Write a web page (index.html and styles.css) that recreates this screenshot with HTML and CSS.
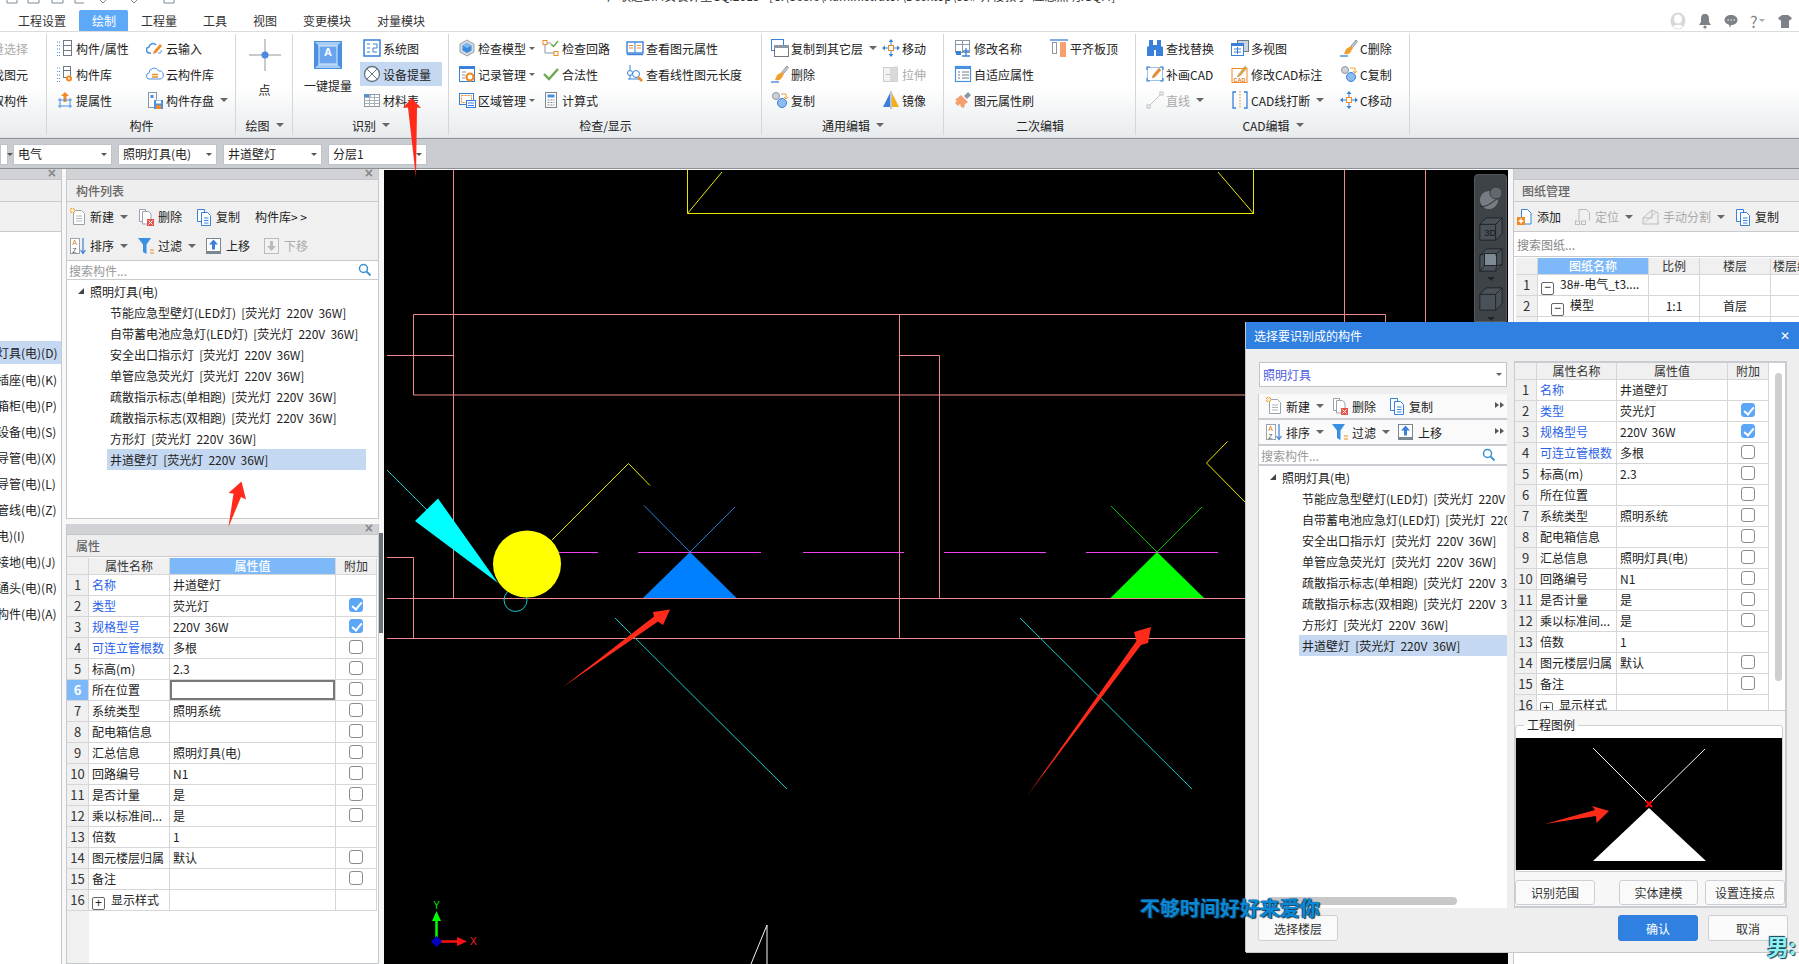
FILE: index.html
```html
<!DOCTYPE html>
<html lang="zh-CN">
<head>
<meta charset="utf-8">
<title>广联达BIM安装计量GQI2018</title>
<link rel="stylesheet" href="styles.css">
</head>
<body>
<svg class="sprite" xmlns="http://www.w3.org/2000/svg">
  <symbol id="i-attr" viewBox="0 0 18 18"><path d="M1 3h4M1 6.500h4M1 10h4M1 13.500h4M1 16.500h4" stroke="#4a90e2" stroke-dasharray="1 1" fill="none"/><rect x="7.500" y="1.500" width="8" height="15" fill="#fff" stroke="#6f7a84"/><path d="M7.500 6.500h8M7.500 11.500h8" stroke="#6f7a84"/></symbol>
  <symbol id="i-lib" viewBox="0 0 18 18"><path d="M1 3h4M1 6.500h4M1 10h4M1 13.500h4M1 16.500h4" stroke="#4a90e2" stroke-dasharray="1 1" fill="none"/><rect x="7.500" y="1.500" width="7" height="11" fill="#fff" stroke="#6f7a84"/><path d="M7.500 5.500h7" stroke="#6f7a84"/><circle cx="13" cy="13.500" r="3" fill="#f08a24"/><circle cx="13" cy="13.500" r="1" fill="#fff"/></symbol>
  <symbol id="i-cloudin" viewBox="0 0 18 18"><path d="M5 14H4a3 3 0 0 1-1-6 4 4 0 0 1 7-2" fill="none" stroke="#4a90e2" stroke-width="1.500"/><path d="M8 12l6-7 2 2-6 7-3 1z" fill="#f08a24"/><path d="M12 14h2a2 2 0 0 0 1-3" fill="none" stroke="#4a90e2"/></symbol>
  <symbol id="i-cloudlib" viewBox="0 0 18 18"><path d="M5 14H4a3 3 0 0 1-1-6 5 5 0 0 1 9.500-2A4 4 0 0 1 14 14z" fill="none" stroke="#4a90e2"/><path d="M6 9.500h6M6 12h6" stroke="#f08a24" stroke-width="1.500"/></symbol>
  <symbol id="i-raise" viewBox="0 0 18 18"><path d="M9 1l4 4h-2.500v6h-3V5H5z" fill="#f08a24"/><path d="M2 9h14M2 15h14M4 7v10M14 7v10" stroke="#4a90e2" fill="none"/></symbol>
  <symbol id="i-save" viewBox="0 0 18 18"><rect x="2.500" y="1.500" width="8" height="15" fill="#fff" stroke="#8b97a3"/><rect x="4.500" y="4" width="3" height="3" fill="#4a90e2"/><rect x="8" y="9" width="9" height="9" fill="#4a90e2"/><rect x="10" y="9.500" width="5" height="3" fill="#fff"/><rect x="10" y="14" width="5" height="4" fill="#f08a24"/></symbol>
  <symbol id="i-sys" viewBox="0 0 18 18"><rect x="1" y="1" width="16" height="16" fill="#fff" stroke="#3a80d8" stroke-width="1.500"/><path d="M4 5h3M4 9h3M4 13h3M10 5h4v4h-4M10 9v4h4" fill="none" stroke="#3a80d8"/></symbol>
  <symbol id="i-dev" viewBox="0 0 18 18"><circle cx="9" cy="9" r="7.500" fill="#fff" stroke="#687684" stroke-width="1.300"/><path d="M4 4l10 10M14 4L4 14" stroke="#687684"/></symbol>
  <symbol id="i-mat" viewBox="0 0 18 18"><rect x="1.500" y="3.500" width="15" height="12" fill="#fff" stroke="#8b97a3"/><rect x="1.500" y="3.500" width="6" height="3" fill="#4a90e2"/><path d="M1.500 6.500h15M1.500 9.500h15M1.500 12.500h15M6.500 3.500v12M11.500 3.500v12" stroke="#a8b0b8"/></symbol>
  <symbol id="i-model" viewBox="0 0 18 18"><path d="M9 1l7 4v8l-7 4-7-4V5z" fill="#d5d9dd" stroke="#9aa3ab"/><path d="M9 4l4.500 2.500v5L9 14l-4.500-2.500v-5z" fill="#3a8ae0"/><path d="M9 4l4.500 2.500L9 9 4.500 6.500z" fill="#7fb8f2"/></symbol>
  <symbol id="i-record" viewBox="0 0 18 18"><rect x="1.500" y="1.500" width="15" height="15" fill="#fff" stroke="#3a80d8"/><rect x="1" y="1" width="16" height="3" fill="#3a80d8"/><path d="M4 7h4M4 10h3M4 13h3" stroke="#8b97a3"/><circle cx="12" cy="12" r="3.500" fill="none" stroke="#f08a24" stroke-width="2.200"/></symbol>
  <symbol id="i-area" viewBox="0 0 18 18"><rect x="1.500" y="2.500" width="14" height="11" fill="#fff" stroke="#3a80d8"/><rect x="3.500" y="4.500" width="10" height="7" fill="none" stroke="#f08a24" stroke-dasharray="2 1"/><rect x="8.500" y="9.500" width="9" height="7" fill="#fff" stroke="#3a80d8"/><path d="M10 12h6M10 14.500h6" stroke="#3a80d8"/></symbol>
  <symbol id="i-loop" viewBox="0 0 18 18"><path d="M3 4h6M3 4v10h10" fill="none" stroke="#8b97a3"/><rect x="1" y="1.500" width="4" height="4" fill="#fff" stroke="#f08a24"/><rect x="12" y="12.500" width="4" height="4" fill="#fff" stroke="#f08a24"/><path d="M9 5l2.500 2.500L16 2" fill="none" stroke="#6aa84f" stroke-width="1.500"/></symbol>
  <symbol id="i-check" viewBox="0 0 18 18"><path d="M2 9l5 5 9-10" fill="none" stroke="#6aa84f" stroke-width="2.400"/></symbol>
  <symbol id="i-calc" viewBox="0 0 18 18"><rect x="3.500" y="1.500" width="11" height="15" fill="#fff" stroke="#7a8690"/><rect x="5.500" y="3.500" width="7" height="3" fill="#4a90e2"/><path d="M5.500 9h7M5.500 11.500h7M5.500 14h7" stroke="#7a8690" stroke-dasharray="2 1"/></symbol>
  <symbol id="i-book" viewBox="0 0 18 18"><rect x="1" y="3" width="16" height="11" fill="#fff" stroke="#3a80d8" stroke-width="1.400"/><path d="M9 3v11" stroke="#3a80d8"/><path d="M3 6.500h4M3 9h4M11 6.500h4M11 9h4" stroke="#f08a24"/><path d="M1 15.500h16" stroke="#3a80d8" stroke-width="1.400"/></symbol>
  <symbol id="i-len" viewBox="0 0 18 18"><path d="M4 0v14M2 14h12" stroke="#3a80d8"/><circle cx="4" cy="8" r="2.500" fill="#fff" stroke="#3a80d8"/><circle cx="10" cy="9" r="3.500" fill="#fff" stroke="#3a80d8"/><path d="M12 12l4 4" stroke="#f08a24" stroke-width="2.500"/></symbol>
  <symbol id="i-copyto" viewBox="0 0 18 18"><rect x="0" y="0" width="13" height="3" fill="#3a80d8"/><rect x=".5" y=".5" width="12" height="11" fill="#fff" stroke="#3a80d8"/><rect x="3.500" y="6.500" width="14" height="11" fill="#fff" stroke="#6f7a84"/><rect x="3" y="6" width="15" height="3" fill="#8b97a3"/></symbol>
  <symbol id="i-del" viewBox="0 0 18 18"><path d="M11 7l5-6 1.500 1.500-5 6z" fill="#c8ccd0" stroke="#8b97a3"/><path d="M6 10l5-3 2 2-3 5c-2 1.500-4 1.500-6 1z" fill="#f0a030"/><path d="M0 17h8" stroke="#3a80d8" stroke-width="1.300"/></symbol>
  <symbol id="i-copy" viewBox="0 0 18 18"><circle cx="5" cy="5" r="3.500" fill="#ccd1d6" stroke="#8b97a3"/><circle cx="11" cy="12" r="4.500" fill="#8cbcf0" stroke="#3a80d8"/><path d="M10 3h5v4M13 6l2 2 2-2" fill="none" stroke="#f0a030"/></symbol>
  <symbol id="i-move" viewBox="0 0 18 18"><path d="M9 0l2.500 3h-5zM9 18l-2.500-3h5zM0 9l3-2.500v5zM18 9l-3 2.500v-5z" fill="#3a80d8"/><path d="M9 3v12M3 9h12" stroke="#3a80d8"/><rect x="6.500" y="6.500" width="5" height="5" fill="#fff" stroke="#f08a24"/></symbol>
  <symbol id="i-stretch" viewBox="0 0 18 18"><rect x="1.500" y="2.500" width="14" height="14" fill="#f3f3f3" stroke="#ccc"/><path d="M8 2.500l7.500-1.500v15.500H8z" fill="#d9d9d9"/><path d="M4 9.500h4" stroke="#bbb"/></symbol>
  <symbol id="i-mirror" viewBox="0 0 18 18"><path d="M8 2v14H1z" fill="#3a80d8"/><path d="M10 2v14h7z" fill="#f2b01e"/><path d="M9 0v18" stroke="#6f7a84" stroke-width=".8"/></symbol>
  <symbol id="i-rename" viewBox="0 0 18 18"><rect x="1.500" y="1.500" width="14" height="12" fill="#fff" stroke="#8b97a3"/><path d="M1.500 5.500h14M8.500 1.500v12" stroke="#8b97a3"/><rect x="2" y="12" width="5" height="4" fill="#3a80d8"/><path d="M9 12h6M12 9v8M8 17h8" stroke="#3a80d8" stroke-width="1.300"/></symbol>
  <symbol id="i-adapt" viewBox="0 0 18 18"><rect x="1.500" y="1.500" width="15" height="15" fill="#fff" stroke="#4a90e2" stroke-width="1.200"/><rect x="1" y="1" width="16" height="3" fill="#4a90e2"/><path d="M4 7h2M4 10h2M4 13h2M8 7h7M8 10h7M8 13h7" stroke="#6f7a84"/></symbol>
  <symbol id="i-brush" viewBox="0 0 18 18"><path d="M10 5l4-4 3 3-4 4z" fill="#8b97a3"/><path d="M7 4l7 7-3 2-1 4-3-1-1-3-2 2-3-3 2-2-2-1z" fill="#f3a070"/></symbol>
  <symbol id="i-align" viewBox="0 0 18 18"><path d="M0 1h18" stroke="#3a80d8" stroke-width="1.300"/><rect x="2.500" y="3.500" width="4" height="11" fill="#fff" stroke="#8b97a3"/><rect x="10" y="3" width="6" height="15" fill="#f8a070"/></symbol>
  <symbol id="i-find" viewBox="0 0 18 18"><path d="M3 1h4v5h4V1h4v6l2 1v9h-7v-6H8v6H1V8l2-1z" fill="#3a80d8"/></symbol>
  <symbol id="i-cadadd" viewBox="0 0 18 18"><path d="M1 5V2h3M14 16h3v-3M1 13v3h3M14 2h3v3" fill="none" stroke="#3a80d8" stroke-width="1.200"/><path d="M1.500 2.500h15v13h-15z" fill="none" stroke="#3a80d8" stroke-width=".5"/><path d="M6 13l1-3 6-7 2 2-6 7z" fill="#f08a24" stroke="#8b97a3" stroke-width=".4"/></symbol>
  <symbol id="i-line" viewBox="0 0 18 18"><path d="M3 15L15 3" stroke="#c4c4c4"/><rect x="1" y="14" width="3" height="3" fill="#fff" stroke="#bbb"/><rect x="14" y="1" width="3" height="3" fill="#fff" stroke="#bbb"/></symbol>
  <symbol id="i-multi" viewBox="0 0 18 18"><rect x="6.500" y="1.500" width="11" height="11" fill="#c8d4e0" stroke="#6f7a84"/><rect x=".5" y="4.500" width="12" height="12" fill="#fff" stroke="#3a80d8"/><rect x="0" y="4" width="13" height="3" fill="#3a80d8"/><path d="M3 10h7M3 13h7M6.500 8v7" stroke="#3a80d8"/></symbol>
  <symbol id="i-cadmark" viewBox="0 0 18 18"><rect x="1" y="3.500" width="15" height="14" fill="#fff" stroke="#f08a24"/><path d="M7 10l7-9 2 2-7 8-3 1z" fill="#e8a030" stroke="#8b97a3" stroke-width=".4"/><text x="2.500" y="16.500" class="svgcad">CAD</text></symbol>
  <symbol id="i-break" viewBox="0 0 18 18"><path d="M5 1H2v16h3M13 1h3v16h-3" fill="none" stroke="#3a80d8" stroke-width="1.300"/><path d="M9 0v18" stroke="#f08a24" stroke-dasharray="1.500 1.500"/></symbol>
  <symbol id="i-new" viewBox="0 0 18 18"><path d="M4.500 2.500h8l3 3v11h-11z" fill="#fff" stroke="#9aa3ab"/><path d="M7 8h6M7 10.500h6M7 13h6" stroke="#b0b6bc"/><rect x="1" y="0" width="5" height="5" fill="#f0a030"/><path d="M1 2.500h5M3.500 0v5M1 0l5 5M6 0L1 5" stroke="#fff" stroke-width=".7"/></symbol>
  <symbol id="i-rm" viewBox="0 0 18 18"><path d="M2.500 1.500h6v12h-6z" fill="#fff" stroke="#9aa3ab"/><path d="M5.500 3.500h6l2.500 2.500v10h-8.500z" fill="#fff" stroke="#9aa3ab"/><rect x="10" y="11" width="7" height="7" fill="#e8524a"/><path d="M11.500 12.500l4 4M15.500 12.500l-4 4" stroke="#fff"/></symbol>
  <symbol id="i-dup" viewBox="0 0 18 18"><path d="M2.500 1.500h7v12h-7z" fill="#fff" stroke="#3a80d8"/><path d="M6.500 4.500h6l3 3v10h-9z" fill="#fff" stroke="#3a80d8"/><path d="M9 10h4.500M9 12.500h4.500M9 15h4.500" stroke="#3a80d8"/></symbol>
  <symbol id="i-sort" viewBox="0 0 18 18"><rect x="1.500" y="1.500" width="9" height="15" fill="#fff" stroke="#9aa3ab"/><text x="3.200" y="8" class="svgaz az1">A</text><text x="3.200" y="15.500" class="svgaz">Z</text><path d="M14 1v15M11.500 13l2.500 3.500 2.500-3.500" fill="none" stroke="#3a80d8" stroke-width="1.200"/></symbol>
  <symbol id="i-filter" viewBox="0 0 18 18"><path d="M1 1h13l-4.500 6.500V17L6 15V7.500z" fill="#3a90e0"/><path d="M13 13h4M13 16h4" stroke="#f08a24"/></symbol>
  <symbol id="i-up" viewBox="0 0 18 18"><rect x="1.500" y="1.500" width="14" height="15" fill="#fff" stroke="#7a8690"/><rect x="1" y="14" width="15" height="3" fill="#7a8690"/><path d="M8.500 2.500l4.500 5h-3v5h-3v-5h-3z" fill="#3a80d8"/></symbol>
  <symbol id="i-down" viewBox="0 0 18 18"><rect x="1.500" y="1.500" width="14" height="15" fill="#f2f2f2" stroke="#bbb"/><path d="M8.500 14l-4.500-5h3V4h3v5h3z" fill="#bbb"/></symbol>
  <symbol id="i-add" viewBox="0 0 18 18"><path d="M5.500 1.500h6l3.500 3.500v11h-9.500z" fill="#fff" stroke="#3a80d8"/><rect x="1" y="9" width="8" height="8" fill="#f08a24"/><path d="M5 10.500v5M2.500 13h5" stroke="#fff" stroke-width="1.400"/></symbol>
  <symbol id="i-locate" viewBox="0 0 18 18"><path d="M7.500 1.500h5l3 3v8M5 12V1.500h3" fill="none" stroke="#bbb"/><rect x="1.500" y="13" width="4" height="3.500" fill="none" stroke="#bbb"/><rect x="7.500" y="13" width="4" height="3.500" fill="none" stroke="#bbb"/></symbol>
  <symbol id="i-split" viewBox="0 0 18 18"><path d="M1 16h16M1 10l9-8 6 3v11M1 10v6M10 2v8H1" fill="none" stroke="#bbb"/><path d="M3 14l12-10" stroke="#bbb" stroke-dasharray="2 1"/></symbol>
  <symbol id="i-search" viewBox="0 0 14 14"><circle cx="5.500" cy="5.500" r="4" fill="none" stroke="#3a90d0" stroke-width="1.500"/><path d="M8.500 8.500l4 4" stroke="#3a90d0" stroke-width="1.800"/></symbol>
  <symbol id="i-cube" viewBox="0 0 28 28"><path d="M2 9l7-7h17v17l-7 7H2z" fill="#4a5159" stroke="#1d2024"/><path d="M2 9h17v17M19 9l7-7" fill="none" stroke="#1d2024"/></symbol>
</svg>

<div class="app">
  <header class="strip">
    <svg class="qat" width="200" height="6" viewBox="0 0 200 6"><path d="M7 0v3h10V0M28 0v3h11V0M52 0v3h11V0M75 0v3h9M100 0l3 3 3-3M131 0l3 3 3-3M164 0v3h10V0" fill="none" stroke="#7a8a9a"/></svg>
    <div class="doc-title">广联达BIM安装计量GQI2018 - [C:\Users\Administrator\Desktop\38#-井楼教学-应急照明.GQI4]</div>
  </header>
  <nav class="tabs">
    <span class="tab first">工程设置</span>
    <span class="tab on">绘制</span>
    <span class="tab">工程量</span>
    <span class="tab">工具</span>
    <span class="tab">视图</span>
    <span class="tab">变更模块</span>
    <span class="tab">对量模块</span>
    <div class="user">
      <svg width="16" height="18" viewBox="0 0 16 18"><ellipse cx="8" cy="9" rx="7.500" ry="8.500" fill="#d6d8da"/><ellipse cx="8" cy="7" rx="4" ry="4.500" fill="#fff"/><path d="M3 15c1-3 9-3 10 0l-5 2z" fill="#fff"/></svg>
      <svg width="14" height="16" viewBox="0 0 14 16"><path d="M7 1c3 0 4 2 4 5v3l2 3H1l2-3V6c0-3 1-5 4-5z" fill="#7c8288"/><circle cx="7" cy="14" r="1.600" fill="#7c8288"/></svg>
      <svg width="14" height="14" viewBox="0 0 14 14"><path d="M7 1c3.500 0 6.500 2 6.500 5S10.500 11 7 11l-1 3-1-3.300C2.500 10 .5 8.500 .5 6 .5 3 3.500 1 7 1z" fill="#7c8288"/><path d="M3.500 6h1.500M6.500 6H8M9.500 6H11" stroke="#fff"/></svg>
      <span class="help">?<i class="caret small"></i></span>
      <svg width="14" height="14" viewBox="0 0 14 14"><path d="M4 1h6l4 3-2 2.500-1-.5v8H3V6l-1 .5L0 4z" fill="#7c8288"/></svg>
    </div>
  </nav>

  <section class="ribbon">
    <div class="rg g0">
      <div class="rgrid">
        <div class="ri end off">批量选择</div>
        <div class="ri end">查找图元</div>
        <div class="ri end">拾取构件</div>
      </div>
    </div>
    <div class="rg g1">
      <div class="rgrid">
        <div class="ri"><svg class="ic"><use href="#i-attr"/></svg>构件/属性</div>
        <div class="ri"><svg class="ic"><use href="#i-cloudin"/></svg>云输入</div>
        <div class="ri"><svg class="ic"><use href="#i-lib"/></svg>构件库</div>
        <div class="ri"><svg class="ic"><use href="#i-cloudlib"/></svg>云构件库</div>
        <div class="ri"><svg class="ic"><use href="#i-raise"/></svg>提属性</div>
        <div class="ri"><svg class="ic"><use href="#i-save"/></svg>构件存盘<i class="caret"></i></div>
      </div>
      <div class="rlabel">构件</div>
    </div>
    <div class="rg g2">
      <div class="rbig">
        <svg width="34" height="34" viewBox="0 0 34 34"><path d="M17 1v32M1 17h32" stroke="#8c979f"/><circle cx="17" cy="17" r="3.500" fill="#4a8ae0"/></svg>
        <span>点</span>
      </div>
      <div class="rlabel">绘图<i class="caret"></i></div>
    </div>
    <div class="rg g3">
      <div class="rg3-body">
        <div class="rbig big-a">
          <svg width="28" height="28" viewBox="0 0 28 28"><rect width="28" height="28" fill="#4a90e2"/><path d="M1 1l5 5h16l5-5zM1 27l5-5h16l5 5z" fill="#a8cdf5"/><rect x="5" y="5" width="18" height="18" fill="#6aa5ee" stroke="#dceafa"/><text x="14" y="15" class="svga">A</text></svg>
          <span>一键提量</span>
        </div>
        <div class="rcol">
          <div class="ri pad"><svg class="ic"><use href="#i-sys"/></svg>系统图</div>
          <div class="ri pad hl"><svg class="ic"><use href="#i-dev"/></svg>设备提量</div>
          <div class="ri pad"><svg class="ic"><use href="#i-mat"/></svg>材料表</div>
        </div>
      </div>
      <div class="rlabel">识别<i class="caret"></i></div>
    </div>
    <div class="rg g4">
      <div class="rgrid">
        <div class="ri"><svg class="ic"><use href="#i-model"/></svg>检查模型<i class="caret tight"></i></div>
        <div class="ri"><svg class="ic"><use href="#i-loop"/></svg>检查回路</div>
        <div class="ri"><svg class="ic"><use href="#i-book"/></svg>查看图元属性</div>
        <div class="ri"><svg class="ic"><use href="#i-record"/></svg>记录管理<i class="caret tight"></i></div>
        <div class="ri"><svg class="ic"><use href="#i-check"/></svg>合法性</div>
        <div class="ri"><svg class="ic"><use href="#i-len"/></svg>查看线性图元长度</div>
        <div class="ri"><svg class="ic"><use href="#i-area"/></svg>区域管理<i class="caret tight"></i></div>
        <div class="ri"><svg class="ic"><use href="#i-calc"/></svg>计算式</div>
      </div>
      <div class="rlabel">检查/显示</div>
    </div>
    <div class="rg g5">
      <div class="rgrid">
        <div class="ri"><svg class="ic"><use href="#i-copyto"/></svg>复制到其它层<i class="caret"></i></div>
        <div class="ri"><svg class="ic"><use href="#i-move"/></svg>移动</div>
        <div class="ri"><svg class="ic"><use href="#i-del"/></svg>删除</div>
        <div class="ri off"><svg class="ic"><use href="#i-stretch"/></svg>拉伸</div>
        <div class="ri"><svg class="ic"><use href="#i-copy"/></svg>复制</div>
        <div class="ri"><svg class="ic"><use href="#i-mirror"/></svg>镜像</div>
      </div>
      <div class="rlabel">通用编辑<i class="caret"></i></div>
    </div>
    <div class="rg g6">
      <div class="rgrid">
        <div class="ri"><svg class="ic"><use href="#i-rename"/></svg>修改名称</div>
        <div class="ri"><svg class="ic"><use href="#i-align"/></svg>平齐板顶</div>
        <div class="ri"><svg class="ic"><use href="#i-adapt"/></svg>自适应属性</div>
        <div></div>
        <div class="ri"><svg class="ic"><use href="#i-brush"/></svg>图元属性刷</div>
      </div>
      <div class="rlabel">二次编辑</div>
    </div>
    <div class="rg g7">
      <div class="rgrid">
        <div class="ri"><svg class="ic"><use href="#i-find"/></svg>查找替换</div>
        <div class="ri"><svg class="ic"><use href="#i-multi"/></svg>多视图</div>
        <div class="ri"><svg class="ic"><use href="#i-del"/></svg>C删除</div>
        <div class="ri"><svg class="ic"><use href="#i-cadadd"/></svg>补画CAD</div>
        <div class="ri"><svg class="ic"><use href="#i-cadmark"/></svg>修改CAD标注</div>
        <div class="ri"><svg class="ic"><use href="#i-copy"/></svg>C复制</div>
        <div class="ri off"><svg class="ic"><use href="#i-line"/></svg>直线<i class="caret"></i></div>
        <div class="ri"><svg class="ic"><use href="#i-break"/></svg>CAD线打断<i class="caret"></i></div>
        <div class="ri"><svg class="ic"><use href="#i-move"/></svg>C移动</div>
      </div>
      <div class="rlabel">CAD编辑<i class="caret"></i></div>
    </div>
  </section>

  <div class="selectors">
    <span class="sel stub"><i class="caret"></i></span>
    <span class="sel">电气<i class="caret"></i></span>
    <span class="sel">照明灯具(电)<i class="caret"></i></span>
    <span class="sel">井道壁灯<i class="caret"></i></span>
    <span class="sel">分层1<i class="caret"></i></span>
  </div>

  <main class="work">
    <aside class="nav-pane">
      <div class="pane-head"><span class="x">×</span></div>
      <div class="pane-title"></div>
      <div class="nav-tools"></div>
      <ul class="nav-list">
        <li class="cur">灯具(电)(D)</li>
        <li>插座(电)(K)</li>
        <li>箱柜(电)(P)</li>
        <li>设备(电)(S)</li>
        <li>导管(电)(X)</li>
        <li>导管(电)(L)</li>
        <li>管线(电)(Z)</li>
        <li>电)(I)</li>
        <li>接地(电)(J)</li>
        <li>通头(电)(R)</li>
        <li>构件(电)(A)</li>
      </ul>
    </aside>

    <div class="mid">
      <section class="panel list-panel">
        <div class="pane-head"><span class="x">×</span></div>
        <div class="pane-title">构件列表</div>
        <div class="tools">
          <div class="trow">
            <span class="ti w68"><svg class="ic"><use href="#i-new"/></svg>新建<i class="caret"></i></span>
            <span class="ti w58"><svg class="ic"><use href="#i-rm"/></svg>删除</span>
            <span class="ti w60"><svg class="ic"><use href="#i-dup"/></svg>复制</span>
            <span class="ti">构件库&gt; &gt;</span>
          </div>
          <div class="trow">
            <span class="ti w68"><svg class="ic"><use href="#i-sort"/></svg>排序<i class="caret"></i></span>
            <span class="ti w68"><svg class="ic"><use href="#i-filter"/></svg>过滤<i class="caret"></i></span>
            <span class="ti w58"><svg class="ic"><use href="#i-up"/></svg>上移</span>
            <span class="ti off"><svg class="ic"><use href="#i-down"/></svg>下移</span>
          </div>
        </div>
        <div class="search"><span>搜索构件...</span><svg class="ic14"><use href="#i-search"/></svg></div>
        <div class="tree">
          <div class="tnode"><i class="tri"></i>照明灯具(电)</div>
          <div class="tleaf">节能应急型壁灯(LED灯) [荧光灯 220V 36W]</div>
          <div class="tleaf">自带蓄电池应急灯(LED灯) [荧光灯 220V 36W]</div>
          <div class="tleaf">安全出口指示灯 [荧光灯 220V 36W]</div>
          <div class="tleaf">单管应急荧光灯 [荧光灯 220V 36W]</div>
          <div class="tleaf">疏散指示标志(单相跑) [荧光灯 220V 36W]</div>
          <div class="tleaf">疏散指示标志(双相跑) [荧光灯 220V 36W]</div>
          <div class="tleaf">方形灯 [荧光灯 220V 36W]</div>
          <div class="tleaf cur">井道壁灯 [荧光灯 220V 36W]</div>
        </div>
      </section>

      <section class="panel prop-panel">
        <div class="pane-head"><span class="x">×</span></div>
        <div class="pane-title">属性</div>
        <div class="prop-body">
          <table class="grid props">
            <colgroup><col class="c22"><col class="c81"><col class="c166"><col class="c41"></colgroup>
            <tr class="hd"><th></th><th>属性名称</th><th class="active">属性值</th><th>附加</th></tr>
            <tr><td class="n">1</td><td class="k blue">名称</td><td>井道壁灯</td><td></td></tr>
            <tr><td class="n">2</td><td class="k blue">类型</td><td>荧光灯</td><td class="c"><i class="cb on"></i></td></tr>
            <tr><td class="n">3</td><td class="k blue">规格型号</td><td>220V 36W</td><td class="c"><i class="cb on"></i></td></tr>
            <tr><td class="n">4</td><td class="k blue">可连立管根数</td><td>多根</td><td class="c"><i class="cb"></i></td></tr>
            <tr><td class="n">5</td><td class="k">标高(m)</td><td>2.3</td><td class="c"><i class="cb"></i></td></tr>
            <tr><td class="n sel-n">6</td><td class="k">所在位置</td><td class="edit"></td><td class="c"><i class="cb"></i></td></tr>
            <tr><td class="n">7</td><td class="k">系统类型</td><td>照明系统</td><td class="c"><i class="cb"></i></td></tr>
            <tr><td class="n">8</td><td class="k">配电箱信息</td><td></td><td class="c"><i class="cb"></i></td></tr>
            <tr><td class="n">9</td><td class="k">汇总信息</td><td>照明灯具(电)</td><td class="c"><i class="cb"></i></td></tr>
            <tr><td class="n">10</td><td class="k">回路编号</td><td>N1</td><td class="c"><i class="cb"></i></td></tr>
            <tr><td class="n">11</td><td class="k">是否计量</td><td>是</td><td class="c"><i class="cb"></i></td></tr>
            <tr><td class="n">12</td><td class="k">乘以标准间...</td><td>是</td><td class="c"><i class="cb"></i></td></tr>
            <tr><td class="n">13</td><td class="k">倍数</td><td>1</td><td></td></tr>
            <tr><td class="n">14</td><td class="k">图元楼层归属</td><td>默认</td><td class="c"><i class="cb"></i></td></tr>
            <tr><td class="n">15</td><td class="k">备注</td><td></td><td class="c"><i class="cb"></i></td></tr>
            <tr><td class="n">16</td><td class="k"><i class="exp">+</i>显示样式</td><td></td><td></td></tr>
          </table>
        </div>
      </section>
    </div>

    <div class="splitter"><div class="thumb"></div></div>

    <div class="canvas">
      <svg class="cad" width="1124" height="794" viewBox="384 170 1124 794">
        <g class="pink">
          <path d="M453.500 170V598M1344.500 170V322M1425.500 170V322"/>
          <path d="M413.500 395V314.500H1385.500V322M413.500 395H1246"/>
          <path d="M387 355.500H453.500M899.500 314.500V638.500M899.500 355.500H939.500V598M387 598.500H1246M387 638.500H1246M387 557.500H413.500V638.500"/>
        </g>
        <path class="yellow" d="M687.500 170V213.500H1253.500V170M687.500 213.500L722 172M1253.500 213.500L1218 172M552 540L628.500 463.500L650 485.500M1227.500 441.500L1206.500 463L1246 503"/>
        <path class="cyan" d="M387 470L427 510M615 618L787 789M1020 618L1192 789"/>
        <polygon class="f-cyan" points="438,498.500 415,521 498,583"/>
        <circle class="cyan" cx="515.500" cy="600" r="11.500"/>
        <ellipse class="f-yellow" cx="527" cy="564" rx="34" ry="33.500"/>
        <path class="magenta" d="M559 552.500H598M638 552.500H761M803 552.500H904M944 552.500H1046M1086 552.500H1218"/>
        <polygon class="f-blue" points="690,552 643,598 736.500,598"/>
        <path class="blue-l" d="M644 505.500L690 552L735 507"/>
        <polygon class="f-green" points="1157,552 1110.500,598 1204,598"/>
        <path class="green-l" d="M1111 506L1157 552L1202 507"/>
        <path class="white-l" d="M767 925V964M767 925L751 964"/>
        <g>
          <path class="axis-g" d="M436.500 941V920"/>
          <polygon class="f-green" points="436.500,911 432,921 441,921"/>
          <path class="axis-r" d="M437 941.500H458"/>
          <polygon class="f-red" points="467,941.500 457,937 457,946"/>
          <polygon class="f-navy" points="436.500,936 442,941.500 436.500,947 431,941.500"/>
          <text x="436.500" y="909" class="ax-y">Y</text>
          <text x="470" y="945" class="ax-x">X</text>
        </g>
      </svg>
      <div class="gizmo">
        <svg width="26" height="26" viewBox="0 0 26 26"><ellipse cx="11" cy="15" rx="9" ry="9" fill="#777c82" transform="rotate(25 11 15)"/><circle cx="18" cy="8" r="6" fill="#63686e" stroke="#3a3d41"/><path d="M2 21c5 2 12-3 18-8" stroke="#2a2c30" fill="none"/></svg>
        <div class="cube3d"><svg width="26" height="28"><use href="#i-cube"/></svg><span>3D</span></div>
        <svg width="26" height="26" viewBox="0 0 28 28"><path d="M2 9l7-7h17v17l-7 7H2z" fill="#4a5159" stroke="#1d2024"/><rect x="7" y="7" width="13" height="13" fill="#7b8a95" stroke="#1d2024"/><path d="M2 9l5-2M19 9l1-2M2 26l5-6M19 26l1-6M26 2l-6 5M26 19l-6 1" stroke="#1d2024"/></svg>
        <i class="caret light"></i>
        <svg width="26" height="28"><use href="#i-cube"/></svg>
        <i class="caret light"></i>
      </div>
    </div>

    <aside class="right-pane">
      <div class="pane-head"></div>
      <div class="pane-title">图纸管理</div>
      <div class="tools single">
        <div class="trow">
          <span class="ti w58"><svg class="ic"><use href="#i-add"/></svg>添加</span>
          <span class="ti w68 off"><svg class="ic"><use href="#i-locate"/></svg>定位<i class="caret"></i></span>
          <span class="ti w92 off"><svg class="ic"><use href="#i-split"/></svg>手动分割<i class="caret"></i></span>
          <span class="ti"><svg class="ic"><use href="#i-dup"/></svg>复制</span>
        </div>
      </div>
      <div class="search tall"><span>搜索图纸...</span></div>
      <table class="grid sheets">
        <colgroup><col class="c22"><col class="c111"><col class="c51"><col class="c71"><col class="c100"></colgroup>
        <tr class="hd"><th></th><th class="active">图纸名称</th><th>比例</th><th>楼层</th><th class="clip">楼层编号</th></tr>
        <tr><td class="n">1</td><td><i class="exp minus">−</i>38#-电气_t3....</td><td></td><td></td><td></td></tr>
        <tr><td class="n">2</td><td><i class="exp minus deep">−</i>模型</td><td class="ctr">1:1</td><td class="ctr">首层</td><td></td></tr>
        <tr><td class="n"></td><td></td><td></td><td></td><td></td></tr>
      </table>
    </aside>
  </main>

  <section class="dialog">
    <div class="d-head"><span>选择要识别成的构件</span><span class="d-close">✕</span></div>
    <div class="d-main">
      <div class="d-left">
        <div class="combo">照明灯具<i class="caret"></i></div>
        <div class="d-tools">
          <div class="trow bar">
            <span class="ti w66"><svg class="ic"><use href="#i-new"/></svg>新建<i class="caret"></i></span>
            <span class="ti w57"><svg class="ic"><use href="#i-rm"/></svg>删除</span>
            <span class="ti"><svg class="ic"><use href="#i-dup"/></svg>复制</span>
            <span class="more"><i class="tick"></i><i class="tick"></i></span>
          </div>
          <div class="trow bar">
            <span class="ti w66"><svg class="ic"><use href="#i-sort"/></svg>排序<i class="caret"></i></span>
            <span class="ti w66"><svg class="ic"><use href="#i-filter"/></svg>过滤<i class="caret"></i></span>
            <span class="ti"><svg class="ic"><use href="#i-up"/></svg>上移</span>
            <span class="more"><i class="tick"></i><i class="tick"></i></span>
          </div>
          <div class="search"><span>搜索构件...</span><svg class="ic14"><use href="#i-search"/></svg></div>
          <div class="tree d-tree">
            <div class="tnode"><i class="tri"></i>照明灯具(电)</div>
            <div class="tleaf">节能应急型壁灯(LED灯) [荧光灯 220V 36W]</div>
            <div class="tleaf">自带蓄电池应急灯(LED灯) [荧光灯 220V 36W]</div>
            <div class="tleaf">安全出口指示灯 [荧光灯 220V 36W]</div>
            <div class="tleaf">单管应急荧光灯 [荧光灯 220V 36W]</div>
            <div class="tleaf">疏散指示标志(单相跑) [荧光灯 220V 36W]</div>
            <div class="tleaf">疏散指示标志(双相跑) [荧光灯 220V 36W]</div>
            <div class="tleaf">方形灯 [荧光灯 220V 36W]</div>
            <div class="tleaf cur">井道壁灯 [荧光灯 220V 36W]</div>
            <div class="hbar"></div>
          </div>
        </div>
      </div>
      <div class="d-right">
        <div class="d-table">
          <table class="grid dprops">
            <colgroup><col class="c22"><col class="c80"><col class="c111"><col class="c41"></colgroup>
            <tr class="hd"><th></th><th>属性名称</th><th>属性值</th><th>附加</th></tr>
            <tr><td class="n">1</td><td class="k blue">名称</td><td>井道壁灯</td><td></td></tr>
            <tr><td class="n">2</td><td class="k blue">类型</td><td>荧光灯</td><td class="c"><i class="cb on"></i></td></tr>
            <tr><td class="n">3</td><td class="k blue">规格型号</td><td>220V 36W</td><td class="c"><i class="cb on"></i></td></tr>
            <tr><td class="n">4</td><td class="k blue">可连立管根数</td><td>多根</td><td class="c"><i class="cb"></i></td></tr>
            <tr><td class="n">5</td><td class="k">标高(m)</td><td>2.3</td><td class="c"><i class="cb"></i></td></tr>
            <tr><td class="n">6</td><td class="k">所在位置</td><td></td><td class="c"><i class="cb"></i></td></tr>
            <tr><td class="n">7</td><td class="k">系统类型</td><td>照明系统</td><td class="c"><i class="cb"></i></td></tr>
            <tr><td class="n">8</td><td class="k">配电箱信息</td><td></td><td class="c"><i class="cb"></i></td></tr>
            <tr><td class="n">9</td><td class="k">汇总信息</td><td>照明灯具(电)</td><td class="c"><i class="cb"></i></td></tr>
            <tr><td class="n">10</td><td class="k">回路编号</td><td>N1</td><td class="c"><i class="cb"></i></td></tr>
            <tr><td class="n">11</td><td class="k">是否计量</td><td>是</td><td class="c"><i class="cb"></i></td></tr>
            <tr><td class="n">12</td><td class="k">乘以标准间...</td><td>是</td><td class="c"><i class="cb"></i></td></tr>
            <tr><td class="n">13</td><td class="k">倍数</td><td>1</td><td></td></tr>
            <tr><td class="n">14</td><td class="k">图元楼层归属</td><td>默认</td><td class="c"><i class="cb"></i></td></tr>
            <tr><td class="n">15</td><td class="k">备注</td><td></td><td class="c"><i class="cb"></i></td></tr>
            <tr><td class="n">16</td><td class="k"><i class="exp">+</i>显示样式</td><td></td><td></td></tr>
          </table>
          <div class="vbar"></div>
        </div>
        <fieldset class="legend-box">
          <legend>工程图例</legend>
          <svg class="preview" width="266" height="132" viewBox="1517 740 266 132">
            <path class="white-l" d="M1594 750L1650 806L1706 751"/>
            <polygon class="f-white" points="1650,810 1594,863 1707,863"/>
            <path class="red-x" d="M1647 803l6 6M1653 803l-6 6"/>
          </svg>
        </fieldset>
        <div class="d-btns">
          <button class="btn b80 mr24">识别范围</button>
          <button class="btn b79 mr7">实体建模</button>
          <button class="btn b80">设置连接点</button>
        </div>
      </div>
    </div>
    <div class="d-foot">
      <button class="btn b80 tall">选择楼层</button>
      <button class="btn b80 tall primary">确认</button>
      <button class="btn b80 tall">取消</button>
    </div>
  </section>

  <div class="caption">不够时间好好来爱你</div>
  <div class="speaker">男:</div>

  <svg class="marks" width="1799" height="964" viewBox="0 0 1799 964">
    <polygon points="416,178 417,107.500 421,108 411.500,98 403,108 408,107.500"/>
    <polygon points="228.500,527 241,497 246,499.500 241.500,481.500 228.500,493 233.500,493.500"/>
    <polygon points="563,687 658,621.500 663,625 670,609.500 653,612 654,616.500"/>
    <polygon points="1027,796 1141,645 1148,643 1151,627 1134,632 1136.500,641"/>
    <polygon points="1545,824 1596,816 1596.500,823 1609,811 1592,806 1595,810"/>
  </svg>
</div>
</body>
</html>
```
FILE: styles.css
```css
* { box-sizing: border-box; }
html, body { margin: 0; padding: 0; }
body {
  font-family: "Noto Sans CJK SC", "Liberation Sans", sans-serif;
  font-size: 12px;
  color: #222;
  background: #fff;
}
.sprite { width: 0; height: 0; position: absolute; }
.app { position: relative; width: 1799px; height: 964px; overflow: hidden; display: flex; flex-direction: column; }

/* top */
.strip { height: 10px; display: flex; overflow: hidden; background: #fff; }
.qat { flex: none; }
.doc-title { margin: -11px 0 0 407px; line-height: 14px; color: #333; white-space: nowrap; font-size: 12px; }
.tabs { height: 21px; display: flex; align-items: stretch; background: #fff; color: #333; }
.tab { padding: 0 13px; line-height: 21px; }
.tab.first { margin-left: 5px; }
.tab.on { background: #5ea8f8; color: #fff; padding: 0 12px 0 13px; border-radius: 2px 2px 0 0; }
.user { margin-left: auto; display: flex; align-items: center; padding-right: 7px; gap: 12px; }
.help { font-size: 16px; color: #7c8288; width: 16px; display: flex; align-items: center; line-height: 1; }

/* carets */
.caret { display: inline-block; width: 0; height: 0; border: 4px solid transparent; border-top: 4px solid #666; border-bottom: 0; margin-left: 6px; flex: none; }
.caret.tight { margin-left: 3px; border-width: 3px; border-bottom: 0; }
.caret.small { border-width: 3px; border-top-color: #aaa; border-bottom: 0; margin-left: 1px; }
.caret.light { border-top-color: #22252a; margin: 0; }

/* ribbon */
.ribbon { height: 108px; display: flex; border-top: 1px solid #dcdcdc; border-bottom: 1px solid #8e9296; background: linear-gradient(#fff 0, #fff 50%, #e8ebed 100%); box-shadow: inset 0 -1px 0 #dfe2e4; }
.rg { display: flex; flex-direction: column; padding-top: 3px; position: relative; flex: none; }
.rg::after { content: ""; position: absolute; right: 0; top: 2px; bottom: 3px; width: 1px; background: #d3d7da; }
.rgrid { display: grid; grid-auto-rows: 26px; height: 78px; padding-left: 9px; }
.rcol { display: grid; grid-auto-rows: 26px; height: 78px; }
.ri { display: flex; align-items: center; white-space: nowrap; }
.ri.off { color: #aaa; }
.ri.end { justify-content: flex-end; width: 28px; }
.ri.pad { padding-left: 3px; }
.ri.hl { background: #c5d8f1; width: 82px; height: 24px; margin-top: 1px; }
.ic { width: 18px; height: 18px; margin-right: 2px; flex: none; }
.ic14 { width: 14px; height: 14px; flex: none; }
.rlabel { flex: 1; display: flex; align-items: center; justify-content: center; padding-bottom: 1px; }
.g0 { width: 47px; } .g0 .rgrid { padding-left: 0; grid-template-columns: 28px; overflow: hidden; }
.g1 { width: 189px; } .g1 .rgrid { grid-template-columns: 90px 90px; } .g1 .rlabel { padding-right: 0; }
.g2 { width: 57px; }
.g3 { width: 156px; }
.g4 { width: 313px; } .g4 .rgrid { grid-template-columns: 84px 84px 130px; }
.g5 { width: 182px; } .g5 .rgrid { grid-template-columns: 111px 60px; }
.g6 { width: 192px; } .g6 .rgrid { padding-left: 10px; grid-template-columns: 96px 80px; }
.g7 { width: 274px; } .g7 .rgrid { padding-left: 10px; grid-template-columns: 85px 109px 60px; }
.rbig { height: 78px; display: flex; flex-direction: column; align-items: center; }
.rbig svg { margin-top: 3px; }
.rbig span { margin-top: 9px; line-height: 18px; }
.g3 .rg3-body { display: flex; height: 78px; padding-left: 0; }
.big-a { width: 64px; flex: none; margin-left: 3px; }
.big-a svg { margin-top: 6px; }
.big-a span { margin-top: 8px; }
.svga { font-size: 11px; fill: #fff; text-anchor: middle; font-family: "Liberation Sans", sans-serif; font-weight: 700; }
.svgcad { font-size: 5.500px; fill: #e8791a; font-family: "Liberation Sans", sans-serif; font-weight: 700; }
.svgaz { font-size: 7px; fill: #555; font-family: "Liberation Sans", sans-serif; }
.az1 { fill: #d87a20; }

/* selectors */
.selectors { height: 29px; display: flex; align-items: center; background: #c9ccd1; gap: 6px; padding-top: 1px; }
.sel { width: 99px; height: 21px; background: #fff; border: 1px solid #c0c3c8; padding-left: 4px; display: flex; align-items: center; justify-content: space-between; padding-right: 4px; line-height: 1; }
.sel .caret { border-width: 3px; border-bottom: 0; border-top-color: #555; }
.sel.stub { width: 8px; padding: 0; margin-right: -1px; }

/* work */
.work { flex: 1; display: flex; border-top: 1px solid #8c8f94; background: #f7f7f7; min-height: 0; }
.pane-head { height: 11px; background: #d0d2d6; position: relative; flex: none; border-bottom: 1px solid #c4c6ca; }
.x { position: absolute; right: 5px; top: -4px; font-size: 14px; line-height: 16px; color: #888; font-family: "Liberation Sans", sans-serif; font-weight: 700; }
.pane-title { height: 22px; line-height: 21px; background: #eeeeee; padding-left: 9px; color: #666; border-bottom: 1px solid #c8cacd; flex: none; font-weight: 500; }

.nav-pane { width: 62px; flex: none; border-right: 1px solid #c5c8cc; display: flex; flex-direction: column; background: #fff; overflow: hidden; }
.nav-tools { height: 30px; background: #f0f0f0; border-bottom: 1px solid #c8cacd; flex: none; }
.nav-list { list-style: none; margin: 109px 0 0; padding: 0; }
.nav-list li { height: 26px; line-height: 26px; margin-left: -3px; white-space: nowrap; }
.nav-list li.cur { background: #c5d8f1; height: 23px; line-height: 23px; margin-bottom: 3px; margin-left: 0; padding-left: 0; text-indent: -3px; overflow: hidden; }

.mid { width: 313px; margin-left: 4px; flex: none; display: flex; flex-direction: column; gap: 5px; }
.panel { border: 1px solid #c5c8cc; background: #fff; display: flex; flex-direction: column; border-top: 0; }
.list-panel { height: 350px; }
.prop-panel { flex: 1; min-height: 0; }
.tools { background: #f0f0f0; padding-left: 2px; border-bottom: 1px solid #c8cacd; flex: none; }
.trow { display: flex; align-items: center; height: 29px; white-space: nowrap; }
.ti { display: flex; align-items: center; flex: none; }
.ti .ic { margin-right: 3px; }
.ti.off { color: #aaa; }
.w57 { width: 57px; } .w58 { width: 58px; } .w60 { width: 60px; } .w66 { width: 66px; } .w68 { width: 68px; } .w92 { width: 92px; }
.search { height: 19px; background: #fff; padding: 0 6px 0 2px; display: flex; align-items: center; justify-content: space-between; color: #999; border-bottom: 1px solid #c8cacd; flex: none; }
.tree { flex: 1; background: #fff; overflow: hidden; padding-top: 1px; position: relative; }
.tnode { height: 21px; line-height: 21px; padding-left: 23px; position: relative; white-space: nowrap; }
.tri { position: absolute; left: 11px; top: 7px; width: 0; height: 0; border-right: 6px solid #444; border-top: 6px solid transparent; }
.tleaf { height: 21px; line-height: 21px; margin: 0 12px 0 40px; padding-left: 3px; white-space: nowrap; word-spacing: 2.500px; }
.tleaf.cur { background: #c5d8f1; }

/* grids */
.grid { border-collapse: separate; border-spacing: 0; table-layout: fixed; font-size: 12px; background: #fff; word-spacing: 2px; }
.grid th, .grid td { height: 21px; padding: 0 0 0 3px; border-right: 1px solid #d6d6d6; border-bottom: 1px solid #d6d6d6; white-space: nowrap; overflow: hidden; font-weight: 400; line-height: 18px; }
.grid tr.hd th { height: 17px; line-height: 16px; background: #f0f0f0; text-align: center; padding: 0; color: #333; }
.grid tr.hd th.active { background: #7db8f8; color: #fff; font-weight: 500; }
.grid td.n { background: #f0f0f0; text-align: center; padding: 0; font-size: 13px; color: #333; }
.grid td.sel-n { background: #7db8f8; color: #fff; font-weight: 700; }
.grid td.blue { color: #2a62e8; }
.grid td.edit { box-shadow: inset 0 0 0 2px #787878; }
.grid td.c { text-align: center; padding: 0; }
.grid td.ctr { text-align: center; padding: 0; }
.c22 { width: 22px; } .c41 { width: 41px; } .c51 { width: 51px; } .c71 { width: 71px; } .c80 { width: 80px; } .c81 { width: 81px; } .c100 { width: 100px; } .c111 { width: 111px; } .c166 { width: 166px; }
.props { width: 310px; }
.dprops { width: 254px; }
.sheets { width: 355px; margin-left: 2px; }
.cb { display: block; width: 14px; height: 14px; margin: 0 auto 2px; border: 1px solid #8d8d8d; border-radius: 3px; background: #fff; position: relative; }
.cb.on { background: #5ba6f6; border-color: #5ba6f6; }
.cb.on::after { content: ""; position: absolute; left: 4px; top: 1px; width: 4px; height: 8px; border: solid #fff; border-width: 0 2px 2px 0; transform: rotate(40deg); }
.exp { display: inline-block; width: 13px; height: 13px; border: 1px solid #666; border-radius: 2px; font-style: normal; line-height: 10px; text-align: center; margin: 0 6px 0 0; vertical-align: -2px; font-size: 12px; font-family: "Liberation Sans", sans-serif; }
.exp.deep { margin-left: 10px; }
.prop-body { flex: 1; background: linear-gradient(to right, #f0f0f0 22px, #fff 22px); overflow: hidden; padding-top: 1px; }
.splitter { width: 5px; flex: none; }
.thumb { margin-top: 364px; width: 4px; height: 100px; background: #6d7278; }

/* canvas */
.canvas { width: 1124px; height: 794px; margin-top: 1px; flex: none; background: #000; position: relative; overflow: hidden; }
.cad { display: block; }
.cad path, .cad circle { fill: none; }
.pink path { stroke: #f08a8a; }
.yellow { stroke: #e8e800; }
.cyan { stroke: #14c8c8; }
.magenta { stroke: #f040f0; }
.blue-l { stroke: #2a7ae0; }
.green-l { stroke: #10c010; }
.white-l { stroke: #f4f4f4; }
.f-cyan { fill: #00ffff; }
.f-yellow { fill: #ffff00; }
.f-blue { fill: #0080ff; }
.f-green { fill: #00ff00; }
.f-white { fill: #fff; }
.f-red { fill: #ff1010; }
.f-navy { fill: #0000c0; }
.cad .axis-g { stroke: #00ff00; stroke-width: 2.500; }
.cad .axis-r { stroke: #ff1010; stroke-width: 2.500; }
.ax-y { font-size: 10px; fill: #00e000; text-anchor: middle; font-family: "Liberation Sans", sans-serif; }
.ax-x { font-size: 10px; fill: #ff2020; font-family: "Liberation Sans", sans-serif; }
.gizmo { position: absolute; left: 1090px; top: 4px; width: 33px; height: 148px; background: #3e4347; border: 1px solid #55595e; border-radius: 4px 4px 0 0; display: flex; flex-direction: column; align-items: center; padding-top: 10px; gap: 4px; }
.cube3d { position: relative; height: 28px; }
.cube3d span { position: absolute; left: 7px; top: 13px; font-size: 9px; line-height: 11px; color: #15171a; font-family: "Liberation Sans", sans-serif; }

/* right */
.right-pane { flex: 1; margin-left: 5px; margin-top: 0; border-left: 1px solid #c5c8cc; background: #fff; display: flex; flex-direction: column; min-width: 0; overflow: hidden; }
.right-pane .pane-title { padding-left: 8px; }
.single .trow { height: 29px; }
.search.tall { height: 25px; padding-left: 3px; font-size: 12px; color: #888; }
.sheets { margin-top: 1px; }
.exp.minus { line-height: 9px; }
.clip { text-align: left !important; padding-left: 2px !important; }

/* dialog */
.dialog { position: absolute; left: 1246px; top: 322px; width: 553px; height: 630px; background: #eeeeee; display: flex; flex-direction: column; box-shadow: 0 1px 0 #c5c9cf, -1px 0 0 #c5c9cf; }
.d-head { height: 27px; background: #2f80e0; color: #fff; display: flex; align-items: center; justify-content: space-between; padding: 0 9px 0 8px; flex: none; }
.d-close { font-size: 12px; font-family: "DejaVu Sans", sans-serif; }
.d-main { height: 547px; margin-top: 12px; padding-left: 12px; display: flex; flex: none; gap: 7px; }
.d-left { width: 249px; display: flex; flex-direction: column; flex: none; }
.combo { height: 25px; margin: 1px 0 7px 1px; background: #fff; border: 1px solid #c0c4c9; color: #4a5ce0; display: flex; align-items: center; justify-content: space-between; padding: 0 4px 0 3px; flex: none; }
.combo .caret { border-width: 3px; border-bottom: 0; }
.d-tools { flex: 1; display: flex; flex-direction: column; gap: 2px; background: #c9cdd2; border-left: 1px solid #c9cdd2; margin-left: 0; min-height: 0; }
.bar { height: 24px; background: #fafafa; padding-left: 6px; position: relative; }
.more { position: absolute; right: 3px; top: 8px; display: flex; gap: 1px; }
.tick { display: block; width: 0; height: 0; border-left: 4px solid #555; border-top: 3.500px solid transparent; border-bottom: 3.500px solid transparent; }
.d-tools .search { height: 18px; border-bottom: 0; padding-right: 11px; }
.d-tree .tnode { padding-left: 23px; }
.d-tree .tleaf { margin-right: 0; }
.hbar { position: absolute; left: 9px; bottom: 3px; width: 189px; height: 8px; background: #c8c8c8; border-radius: 4px; }
.d-right { width: 273px; flex: none; border: solid #c9cdd2; border-width: 2px 2px 2px 1px; background: #f7f7f7; display: flex; flex-direction: column; }
.d-table { height: 348px; flex: none; background: #fff; overflow: hidden; border-bottom: 1px solid #c9cdd2; position: relative; }
.vbar { position: absolute; left: 260px; top: 10px; width: 7px; height: 308px; background: #cfcfcf; border-radius: 4px; }
.legend-box { margin: 5px 2px 0 0; padding: 4px 0 0; height: 156px; border: 1px solid #cfcfcf; border-radius: 3px; background: #fff; flex: none; min-width: 0; }
.legend-box legend { padding: 0 3px; margin-left: 8px; line-height: 18px; height: 18px; }
.preview { display: block; background: #000; margin: 0 auto; }
.red-x { stroke: #ff0000; stroke-width: 2; fill: none; }
.d-btns { display: flex; margin-top: 8px; }
.btn { height: 25px; padding: 0; background: #fafafa; border: 1px solid #ccd0d6; border-radius: 3px; font: inherit; color: #333; flex: none; }
.b80 { width: 80px; } .b79 { width: 79px; }
.mr24 { margin-right: 24px; } .mr7 { margin-right: 7px; }
.btn.tall { height: 26px; }
.btn.primary { background: #2f80e0; border-color: #2f80e0; color: #fff; margin-left: auto; margin-right: 10px; }
.d-foot { flex: 1; display: flex; align-items: flex-start; padding: 7px 11px 0 12px; }

/* overlay */
.caption { position: absolute; left: 1140px; top: 894px; font-size: 20px; line-height: 28px; font-weight: 700; color: #0a88d8; white-space: nowrap; text-shadow: 1px 1px 1px #123c56, -1px 0 1px #123c56; }
.speaker { position: absolute; left: 1767px; top: 931px; font-size: 22px; line-height: 28px; font-weight: 700; color: #8ff0f0; white-space: nowrap; text-shadow: 1px 1px 1px #123c56, -1px -1px 1px #123c56; }
.marks { position: absolute; left: 0; top: 0; pointer-events: none; }
.marks polygon { fill: #ff2a1a; }
```
